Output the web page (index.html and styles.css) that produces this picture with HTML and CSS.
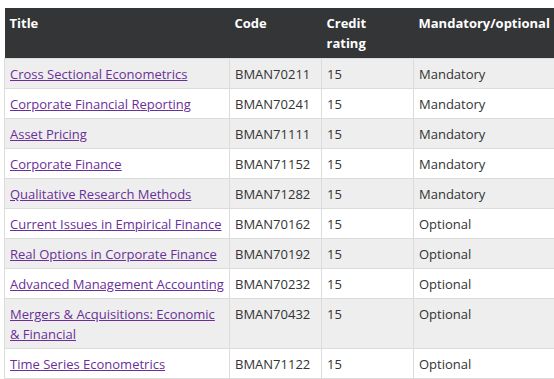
FILE: index.html
```html
<!DOCTYPE html>
<html lang="en">
<head>
<meta charset="utf-8">
<title>Course units</title>
<link rel="stylesheet" href="styles.css">
</head>
<body>
<table class="units">
  <colgroup>
    <col class="c-title">
    <col class="c-code">
    <col class="c-credit">
    <col class="c-mand">
  </colgroup>
  <thead>
    <tr><th>Title</th><th>Code</th><th>Credit rating</th><th>Mandatory/optional</th></tr>
  </thead>
  <tbody>
    <tr><td><a href="#">Cross Sectional Econometrics</a></td><td>BMAN70211</td><td>15</td><td>Mandatory</td></tr>
    <tr><td><a href="#">Corporate Financial Reporting</a></td><td>BMAN70241</td><td>15</td><td>Mandatory</td></tr>
    <tr><td><a href="#">Asset Pricing</a></td><td>BMAN71111</td><td>15</td><td>Mandatory</td></tr>
    <tr><td><a href="#">Corporate Finance</a></td><td>BMAN71152</td><td>15</td><td>Mandatory</td></tr>
    <tr><td><a href="#">Qualitative Research Methods</a></td><td>BMAN71282</td><td>15</td><td>Mandatory</td></tr>
    <tr><td><a href="#">Current Issues in Empirical Finance</a></td><td>BMAN70162</td><td>15</td><td>Optional</td></tr>
    <tr><td><a href="#">Real Options in Corporate Finance</a></td><td>BMAN70192</td><td>15</td><td>Optional</td></tr>
    <tr><td><a href="#">Advanced Management Accounting</a></td><td>BMAN70232</td><td>15</td><td>Optional</td></tr>
    <tr><td><a href="#">Mergers &amp; Acquisitions: Economic &amp; Financial</a></td><td>BMAN70432</td><td>15</td><td>Optional</td></tr>
    <tr><td><a href="#">Time Series Econometrics</a></td><td>BMAN71122</td><td>15</td><td>Optional</td></tr>
  </tbody>
</table>
</body>
</html>
```
FILE: styles.css
```css
html, body {
  margin: 0;
  padding: 0;
  overflow: hidden;
  background: #fff;
}
body {
  padding: 8px 0 0 4px;
  font-family: "Open Sans", "Liberation Sans", sans-serif;
  font-size: 13px;
  line-height: 20px;
  color: #333;
}
.units {
  border-collapse: collapse;
  table-layout: fixed;
  width: 620px;
}
.c-title { width: 225px; }
.c-code { width: 92px; }
.c-credit { width: 92px; }
.c-mand { width: 211px; }
.units th {
  background: #333537;
  color: #fff;
  font-weight: 700;
  text-align: left;
  vertical-align: top;
  padding: 5px 12px 5px 5px;
}
.units td {
  vertical-align: top;
  padding: 5px 2px 4px 5px;
  border: 1px solid #dcdcdc;
}
.units tbody tr:nth-child(odd) td { background: #eeeeee; }
.units a {
  color: #6b2f9a;
  text-decoration: underline;
}
```
